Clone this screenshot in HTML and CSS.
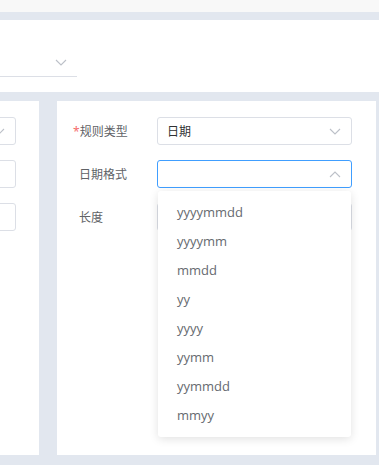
FILE: index.html
```html
<!DOCTYPE html>
<html lang="zh-CN">
<head>
  <meta charset="UTF-8" />
  <meta name="viewport" content="width=device-width, initial-scale=1.0"/>
  <title>规则配置</title>
  <link rel="stylesheet" href="styles.css">
</head>
<body>
  <!-- Top bar -->
  <div class="topbar"></div>

  <!-- Filter card -->
  <div class="filter-card">
    <div class="filter-select">
      <svg class="arrow" width="12" height="7" viewBox="0 0 12 7"><polyline points="1,1 6,6 11,1" /></svg>
    </div>
  </div>

  <!-- Panels -->
  <div class="panels">
    <div class="panel panel-left">
      <div class="field">
        <svg class="arrow" width="12" height="7" viewBox="0 0 12 7"><polyline points="1,1 6,6 11,1" /></svg>
      </div>
      <div class="field"></div>
      <div class="field"></div>
    </div>

    <div class="panel panel-right">
      <div class="form-item">
        <label class="form-label"><span class="required">*</span>规则类型</label>
        <div class="select">
          <span class="select-value">日期</span>
          <svg class="arrow" width="12" height="7" viewBox="0 0 12 7"><polyline points="1,1 6,6 11,1" /></svg>
        </div>
      </div>

      <div class="form-item">
        <label class="form-label">日期格式</label>
        <div class="select is-focus">
          <span class="select-value"></span>
          <svg class="arrow" width="12" height="7" viewBox="0 0 12 7"><polyline points="1,6 6,1 11,6" /></svg>
        </div>
        <ul class="dropdown">
          <li>yyyymmdd</li>
          <li>yyyymm</li>
          <li>mmdd</li>
          <li>yy</li>
          <li>yyyy</li>
          <li>yymm</li>
          <li>yymmdd</li>
          <li>mmyy</li>
        </ul>
      </div>

      <div class="form-item">
        <label class="form-label">长度</label>
        <div class="select"></div>
      </div>
    </div>
  </div>
</body>
</html>
```

FILE: styles.css
```css
/* Page */
html, body {
  margin: 0;
  padding: 0;
}

body {
  width: 379px;
  height: 465px;
  overflow: hidden;
  background: #e2e7ef;
  font-family: "Noto Sans", "Noto Sans CJK SC", sans-serif;
  font-size: 12px;
  color: #606266;
}

.arrow {
  display: block;
  fill: none;
  stroke: #bcc0c8;
  stroke-width: 1.1;
}

/* Top bar */
.topbar {
  height: 12px;
  background: #f8f8f8;
  margin-bottom: 8px;
}

/* Filter card */
.filter-card {
  height: 72px;
  background: #ffffff;
  padding-top: 29px;
  box-sizing: border-box;
  margin-bottom: 9px;
}

.filter-select {
  width: 77px;
  height: 28px;
  border-bottom: 1px solid #dcdfe6;
  box-sizing: border-box;
  display: flex;
  align-items: center;
  justify-content: flex-end;
  padding-right: 10px;
}

/* Panels */
.panels {
  display: flex;
  gap: 18px;
  height: 354px;
}

.panel {
  background: #ffffff;
  padding-top: 16px;
  box-sizing: border-box;
}

.panel-left {
  width: 39px;
  overflow: hidden;
  display: flex;
  flex-direction: column;
  align-items: flex-end;
  padding-right: 23px;
}

.field {
  flex-shrink: 0;
  width: 80px;
  height: 28px;
  margin-bottom: 15px;
  border: 1px solid #dcdfe6;
  border-radius: 3px;
  box-sizing: border-box;
  display: flex;
  align-items: center;
  justify-content: flex-end;
  padding-right: 10px;
}

.panel-right {
  width: 319px;
  padding-left: 22px;
}

/* Form items */
.form-item {
  position: relative;
  display: flex;
  align-items: center;
  height: 28px;
  margin-bottom: 15px;
}

.form-label {
  width: 78px;
  color: #606266;
  white-space: nowrap;
}

.required {
  color: #f56c6c;
  margin-left: -6px;
  margin-right: 0;
}

.select {
  width: 195px;
  height: 28px;
  border: 1px solid #dcdfe6;
  border-radius: 3px;
  box-sizing: border-box;
  display: flex;
  align-items: center;
  justify-content: space-between;
  padding: 0 10px 0 9px;
  background: #ffffff;
}

.select.is-focus {
  border-color: #409eff;
}

.select-value {
  color: #303133;
}

/* Dropdown */
.dropdown {
  position: absolute;
  top: 31px;
  left: 79px;
  width: 193px;
  margin: 0;
  padding: 7px 0;
  list-style: none;
  background: #ffffff;
  border-radius: 3px;
  box-shadow: 0 2px 10px rgba(0, 0, 0, 0.12);
  z-index: 2;
}

.dropdown li {
  height: 29px;
  line-height: 29px;
  padding-left: 19px;
  font-family: "Open Sans", sans-serif;
  font-size: 13px;
  color: #666a70;
}
```
